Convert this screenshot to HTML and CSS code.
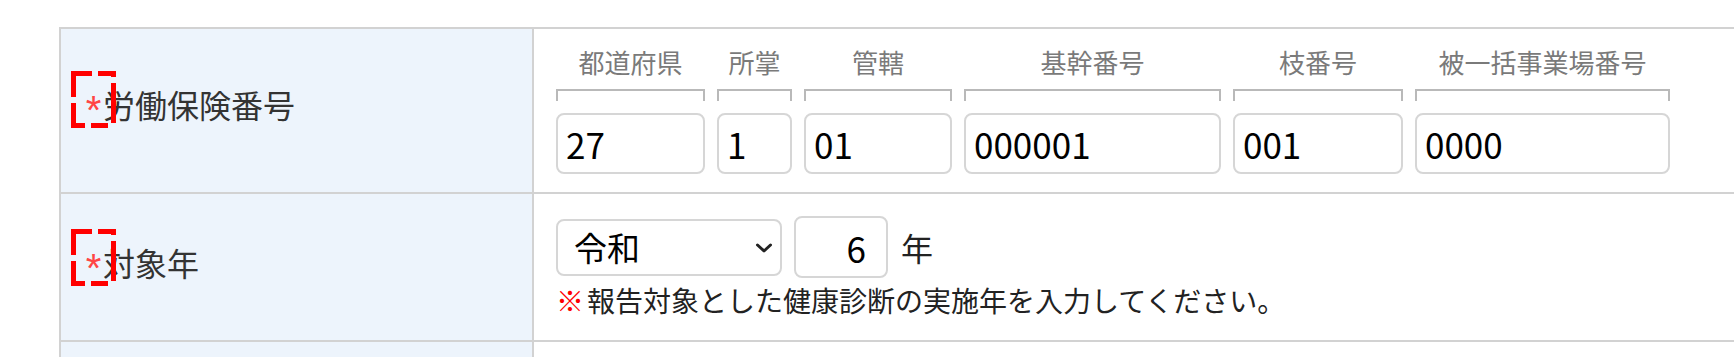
FILE: index.html
```html
<!DOCTYPE html>
<html lang="ja">
<head>
<meta charset="utf-8">
<title>労働保険番号</title>
<link rel="stylesheet" href="styles.css">
</head>
<body>
<div class="form-table">
  <div class="th th-insurance">
    <span class="label"><span class="req"><span class="req-mark">*</span><svg class="req-box" width="45" height="57" viewBox="0 0 45 57" aria-hidden="true"><g fill="#ff0000"><rect x="0" y="0" width="21" height="5"/><rect x="27" y="0" width="18" height="5"/><rect x="40" y="0" width="5" height="6"/><rect x="40" y="12" width="5" height="40"/><rect x="0" y="52" width="14" height="5"/><rect x="20" y="52" width="17" height="5"/><rect x="0" y="0" width="5" height="26"/><rect x="0" y="32" width="5" height="25"/></g></svg></span>労働保険番号</span>
  </div>
  <div class="td td-number">
    <div class="num-field w-pref">
      <div class="num-head">都道府県</div>
      <div class="bracket"></div>
      <input class="text-input" type="text" value="27">
    </div>
    <div class="num-field w-office">
      <div class="num-head">所掌</div>
      <div class="bracket"></div>
      <input class="text-input" type="text" value="1">
    </div>
    <div class="num-field w-juris">
      <div class="num-head">管轄</div>
      <div class="bracket"></div>
      <input class="text-input" type="text" value="01">
    </div>
    <div class="num-field w-base">
      <div class="num-head">基幹番号</div>
      <div class="bracket"></div>
      <input class="text-input" type="text" value="000001">
    </div>
    <div class="num-field w-branch">
      <div class="num-head">枝番号</div>
      <div class="bracket"></div>
      <input class="text-input" type="text" value="001">
    </div>
    <div class="num-field w-site">
      <div class="num-head">被一括事業場番号</div>
      <div class="bracket"></div>
      <input class="text-input" type="text" value="0000">
    </div>
  </div>

  <div class="th th-year">
    <span class="label"><span class="req"><span class="req-mark">*</span><svg class="req-box" width="45" height="57" viewBox="0 0 45 57" aria-hidden="true"><g fill="#ff0000"><rect x="0" y="0" width="21" height="5"/><rect x="27" y="0" width="18" height="5"/><rect x="40" y="0" width="5" height="6"/><rect x="40" y="12" width="5" height="40"/><rect x="0" y="52" width="14" height="5"/><rect x="20" y="52" width="17" height="5"/><rect x="0" y="0" width="5" height="26"/><rect x="0" y="32" width="5" height="25"/></g></svg></span>対象年</span>
  </div>
  <div class="td td-year">
    <div class="year-row">
      <div class="select-wrap">
        <select class="era">
          <option>令和</option>
          <option>平成</option>
        </select>
        <svg class="chev" width="18" height="10" viewBox="0 0 18 10" aria-hidden="true">
          <path d="M2.5 2 L9 8 L15.5 2" fill="none" stroke="#222" stroke-width="3" stroke-linecap="round" stroke-linejoin="round"/>
        </svg>
      </div>
      <input class="text-input year-input" type="text" value="6">
      <span class="unit">年</span>
    </div>
    <p class="note"><span class="kome">※</span>報告対象とした健康診断の実施年を入力してください。</p>
  </div>

  <div class="th th-empty"></div>
  <div class="td td-empty"></div>
</div>
</body>
</html>
```
FILE: styles.css
```css
html, body {
  margin: 0;
  padding: 0;
  overflow: hidden;
  background: #ffffff;
}

body {
  font-family: "Noto Sans CJK JP", "Noto Sans", sans-serif;
  color: #333333;
}

.form-table {
  display: grid;
  grid-template-columns: 473px 1fr;
  margin: 27px 0 0 59px;
  width: calc(100vw - 20px);
  border-top: 2px solid #d2d2d2;
  border-left: 2px solid #d2d2d2;
}

.th, .td {
  box-sizing: border-box;
  border-right: 2px solid #d2d2d2;
  border-bottom: 2px solid #d2d2d2;
}

.th {
  background: #edf4fc;
  display: flex;
  align-items: center;
  padding: 0 0 10px 23px;
}

.th-insurance {
  padding-bottom: 14px;
}

.label {
  font-size: 32px;
  line-height: 44px;
  color: #333333;
  white-space: nowrap;
}

.req {
  position: relative;
  display: inline-block;
  width: 19px;
  text-align: center;
  color: #ff4545;
}

.req-mark {
  position: relative;
  top: 6px;
  font-family: "Liberation Sans", "Noto Sans", sans-serif;
  font-size: 40px;
  line-height: 0;
}

.req-box {
  position: absolute;
  left: -13px;
  top: -11px;
}

.td {
  background: #ffffff;
}

.td-number {
  display: flex;
  gap: 12px;
  padding: 15px 0 18px 22px;
}

.num-field {
  display: flex;
  flex-direction: column;
}

.w-pref { width: 149px; }
.w-office { width: 75px; }
.w-juris { width: 148px; }
.w-base { width: 257px; }
.w-branch { width: 170px; }
.w-site { width: 255px; }

.num-head {
  font-size: 26px;
  line-height: 36px;
  color: #7a7a7a;
  text-align: center;
  white-space: nowrap;
}

.bracket {
  margin-top: 9px;
  height: 12px;
  box-sizing: border-box;
  border: 2px solid #b9b9b9;
  border-bottom: none;
}

.text-input {
  box-sizing: border-box;
  height: 61px;
  margin: 12px 0 0 0;
  padding: 0 8px;
  width: 100%;
  border: 2px solid #d6d6d6;
  border-radius: 8px;
  background: #ffffff;
  font-family: "Noto Sans CJK JP", "Noto Sans", sans-serif;
  font-size: 35px;
  color: #000000;
  outline: none;
}

.td-year {
  padding: 22px 0 22px 22px;
}

.year-row {
  display: flex;
  align-items: center;
  gap: 12px;
  height: 62px;
}

.select-wrap {
  position: relative;
  width: 226px;
  height: 57px;
}

.era {
  appearance: none;
  -webkit-appearance: none;
  box-sizing: border-box;
  width: 100%;
  height: 100%;
  margin: 0;
  padding: 0 0 0 16px;
  border: 2px solid #d6d6d6;
  border-radius: 8px;
  background: #ffffff;
  font-family: "Noto Sans CJK JP", "Noto Sans", sans-serif;
  font-size: 33px;
  color: #000000;
  outline: none;
}

.chev {
  position: absolute;
  right: 9px;
  top: 24px;
  pointer-events: none;
}

.year-input {
  width: 94px;
  height: 62px;
  margin: 0;
  text-align: right;
  padding: 0 20px 0 8px;
}

.unit {
  font-size: 32px;
  line-height: 44px;
  color: #222222;
  margin-left: 1px;
}

.note {
  margin: 4px 0 0 0;
  font-size: 28px;
  line-height: 36px;
  color: #222222;
  white-space: nowrap;
}

.kome {
  color: #ff0000;
  margin-right: 3px;
}

.th-empty, .td-empty {
  height: 120px;
}
```
